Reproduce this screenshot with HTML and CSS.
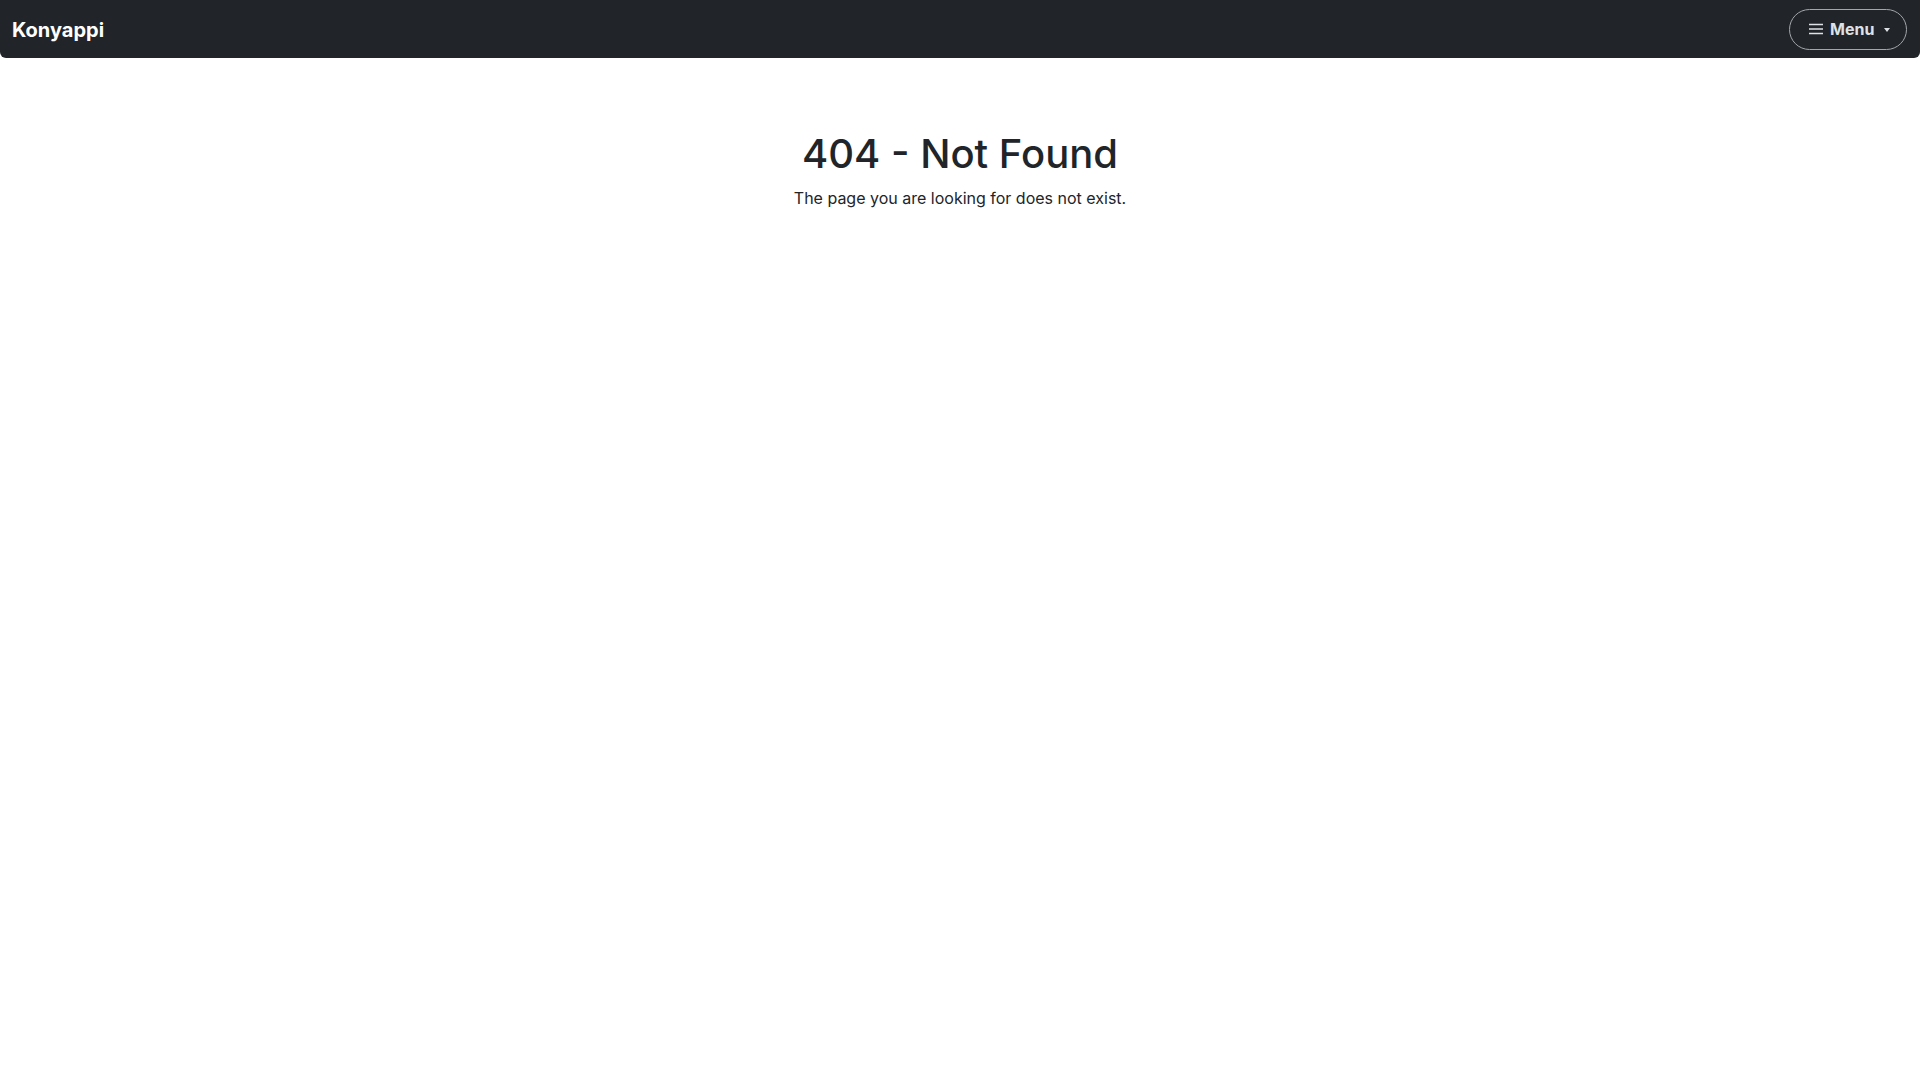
FILE: index.html
```html
<!DOCTYPE html>
<html lang="en">
<head>
<meta charset="utf-8">
<title>Konyappi - 404</title>
<link rel="stylesheet" href="styles.css">
</head>
<body>
<nav class="navbar">
  <a class="brand" href="#">Konyappi</a>
  <button class="menu-btn" type="button">
    <svg class="burger" width="14" height="12" viewBox="0 0 14 12" aria-hidden="true">
      <path d="M0.5 1.5H13.5M0.5 6H13.5M0.5 10.5H13.5" stroke="currentColor" stroke-width="1.6" stroke-linecap="round"/>
    </svg>
    <span class="menu-label">Menu</span>
    <span class="caret"></span>
  </button>
</nav>
<main class="content">
  <h1 class="title">404 - Not Found</h1>
  <p class="lead">The page you are looking for does not exist.</p>
</main>
</body>
</html>
```
FILE: styles.css
```css
* { box-sizing: border-box; }
html, body { margin: 0; padding: 0; }
body {
  font-family: Inter, "Noto Sans", sans-serif;
  color: #212529;
  background: #fff;
}
.navbar {
  height: 58px;
  background: #212529;
  border-radius: 0 0 6px 6px;
  display: flex;
  align-items: center;
  justify-content: space-between;
  padding: 0 13px 0 12px;
}
.brand {
  color: #fff;
  font-weight: 700;
  font-size: 20px;
  text-decoration: none;
  line-height: 1;
  margin-top: 1px;
}
.menu-btn {
  height: 41px;
  width: 118px;
  border: 1px solid #a3a7ab;
  border-radius: 999px;
  background: transparent;
  color: #dee2e6;
  font-family: Inter, "Noto Sans", sans-serif;
  font-weight: 700;
  font-size: 16px;
  display: flex;
  align-items: center;
  padding: 0 0 0 19px;
  gap: 7px;
}
.burger { display: block; }
.menu-label { line-height: 1; }
.caret {
  width: 0;
  height: 0;
  border-left: 3.5px solid transparent;
  border-right: 3.5px solid transparent;
  border-top: 4px solid #dee2e6;
  margin-left: 3px;
  margin-top: 1px;
}
.content {
  text-align: center;
  padding-top: 72px;
}
.title {
  margin: 0;
  font-size: 40px;
  font-weight: 500;
  line-height: 1.2;
  letter-spacing: 0;
}
.lead {
  margin: 8px 0 0;
  font-size: 16px;
  line-height: 1.5;
}
```
